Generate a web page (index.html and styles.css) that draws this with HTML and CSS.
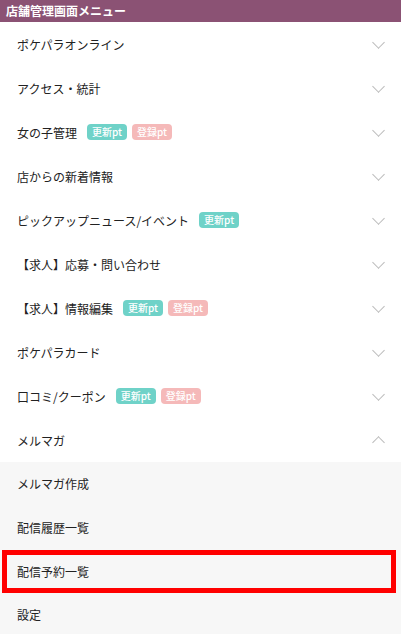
FILE: index.html
```html
<!DOCTYPE html>
<html lang="ja">
  <head>
    <meta charset="UTF-8" />
    <title>店舗管理画面メニュー</title>
    <link rel="stylesheet" href="styles.css">
  </head>
  <body>
    <div id="menu">
      <div class="menuTitle">店舗管理画面メニュー</div>

      <div class="menuItem">
        <span class="itemLabel">ポケパラオンライン</span>
        <span class="chevron"></span>
      </div>
      <div class="menuItem">
        <span class="itemLabel">アクセス・統計</span>
        <span class="chevron"></span>
      </div>
      <div class="menuItem">
        <span class="itemLabel">女の子管理</span>
        <span class="badge update">更新pt</span>
        <span class="badge regist">登録pt</span>
        <span class="chevron"></span>
      </div>
      <div class="menuItem">
        <span class="itemLabel">店からの新着情報</span>
        <span class="chevron"></span>
      </div>
      <div class="menuItem">
        <span class="itemLabel">ピックアップニュース/イベント</span>
        <span class="badge update">更新pt</span>
        <span class="chevron"></span>
      </div>
      <div class="menuItem">
        <span class="itemLabel">【求人】応募・問い合わせ</span>
        <span class="chevron"></span>
      </div>
      <div class="menuItem">
        <span class="itemLabel">【求人】情報編集</span>
        <span class="badge update">更新pt</span>
        <span class="badge regist">登録pt</span>
        <span class="chevron"></span>
      </div>
      <div class="menuItem">
        <span class="itemLabel">ポケパラカード</span>
        <span class="chevron"></span>
      </div>
      <div class="menuItem">
        <span class="itemLabel">口コミ/クーポン</span>
        <span class="badge update">更新pt</span>
        <span class="badge regist">登録pt</span>
        <span class="chevron"></span>
      </div>
      <div class="menuItem open">
        <span class="itemLabel">メルマガ</span>
        <span class="chevron"></span>
      </div>

      <div class="subMenu">
        <div class="subItem">メルマガ作成</div>
        <div class="subItem">配信履歴一覧</div>
        <div class="subItem current">配信予約一覧</div>
        <div class="subItem">設定</div>
      </div>
    </div>
  </body>
</html>
```

FILE: styles.css
```css
body {
  margin: 0;
  background-color: #fff;
  font-family: "Noto Sans CJK JP", "Liberation Sans", sans-serif;
}

#menu {
  width: 401px;
  color: #222;
  font-size: 12px;
}

.menuTitle {
  height: 22px;
  line-height: 22px;
  padding-left: 6px;
  background-color: #8b5274;
  color: #fff;
  font-size: 12px;
  font-weight: bold;
}

.menuItem {
  display: flex;
  align-items: center;
  height: 44px;
  padding: 0 17px;
}

.itemLabel {
  margin-right: 10px;
}

.badge {
  display: inline-block;
  height: 16px;
  line-height: 16px;
  padding: 0 5px;
  margin-right: 5px;
  border-radius: 4px;
  color: #fff;
  font-size: 10px;
  font-weight: 500;
}

.update {
  background-color: #6fd2c8;
}

.regist {
  background-color: #f5b9b9;
}

.chevron {
  margin-left: auto;
  margin-right: 1px;
  width: 8px;
  height: 8px;
  border-right: 1px solid #bbb;
  border-bottom: 1px solid #bbb;
  transform: translateY(-2px) rotate(45deg);
}

.open .chevron {
  transform: translateY(2px) rotate(-135deg);
}

.subMenu {
  background-color: #f7f7f7;
}

.subItem {
  height: 44px;
  line-height: 44px;
  padding-left: 17px;
}

.subItem.current {
  margin: 0 5px 0 2px;
  height: 33px;
  line-height: 33px;
  padding-left: 10px;
  border: 5px solid #f00;
}
```
